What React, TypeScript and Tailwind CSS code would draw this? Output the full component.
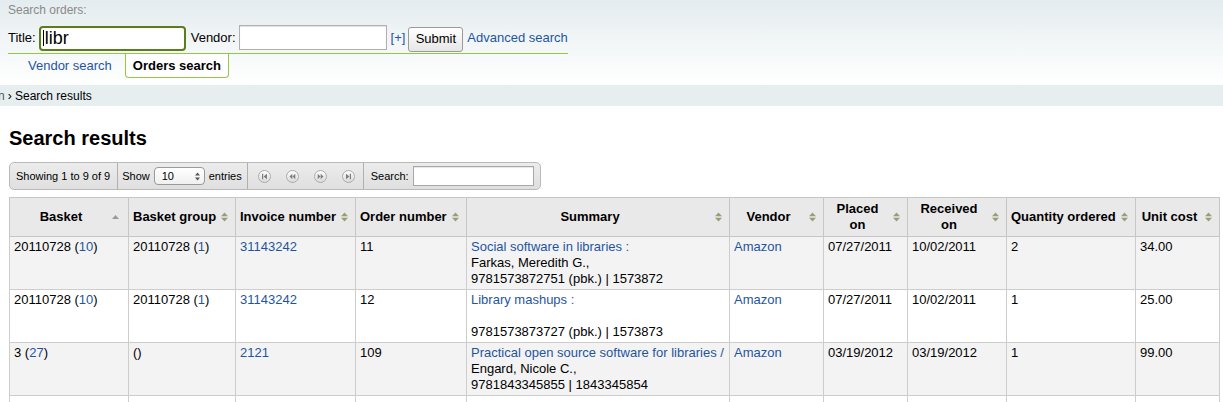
import React from 'react';

const LINK = 'text-[#1f55a0]';

interface OrderRow {
  basket: string;
  basketN: string;
  group: string;
  groupN: string;
  invoice: string;
  order: string;
  title: string;
  author: string;
  isbn: string;
  placed: string;
  received: string;
  qty: string;
  cost: string;
}

const rows: OrderRow[] = [
  {
    basket: '20110728', basketN: '10', group: '20110728', groupN: '1', invoice: '31143242', order: '11',
    title: 'Social software in libraries :', author: 'Farkas, Meredith G.,', isbn: '9781573872751 (pbk.) | 1573872',
    placed: '07/27/2011', received: '10/02/2011', qty: '2', cost: '34.00',
  },
  {
    basket: '20110728', basketN: '10', group: '20110728', groupN: '1', invoice: '31143242', order: '12',
    title: 'Library mashups :', author: '', isbn: '9781573873727 (pbk.) | 1573873',
    placed: '07/27/2011', received: '10/02/2011', qty: '1', cost: '25.00',
  },
  {
    basket: '3', basketN: '27', group: '', groupN: '', invoice: '2121', order: '109',
    title: 'Practical open source software for libraries /', author: 'Engard, Nicole C.,', isbn: '9781843345855 | 1843345854',
    placed: '03/19/2012', received: '03/19/2012', qty: '1', cost: '99.00',
  },
];

const SortBoth = () => (
  <svg width="7" height="10" viewBox="0 0 7 10" className="absolute right-[7px] top-1/2 -translate-y-1/2">
    <path d="M0 4.2L3.5 0.5L7 4.2Z M0 5.8L3.5 9.5L7 5.8Z" fill="#979e78" />
  </svg>
);

const SortUp = () => (
  <svg width="7" height="5" viewBox="0 0 7 5" className="absolute right-[9px] top-1/2 -translate-y-1/2">
    <path d="M0 4.5L3.5 0.5L7 4.5Z" fill="#9a9a9a" />
  </svg>
);

const PageIcon = ({ kind }: { kind: 'first' | 'prev' | 'next' | 'last' }) => {
  const shapes: Record<string, string> = {
    first: 'M4 3.8h1.2v5.4H4Z M9 3.8L5.6 6.5L9 9.2Z',
    prev: 'M6.3 3.8L3.5 6.5L6.3 9.2Z M9.3 3.8L6.5 6.5L9.3 9.2Z',
    next: 'M3.7 3.8L6.5 6.5L3.7 9.2Z M6.7 3.8L9.5 6.5L6.7 9.2Z',
    last: 'M4 3.8L7.4 6.5L4 9.2Z M7.8 3.8h1.2v5.4H7.8Z',
  };
  return (
    <svg width="13" height="13" viewBox="0 0 13 13">
      <defs>
        <linearGradient id={`pg-${kind}`} x1="0" y1="0" x2="0" y2="1">
          <stop offset="0" stopColor="#ffffff" />
          <stop offset="1" stopColor="#d8d8d8" />
        </linearGradient>
      </defs>
      <circle cx="6.5" cy="6.5" r="6" fill={`url(#pg-${kind})`} stroke="#ababab" />
      <path d={shapes[kind]} fill="#7d7d7d" />
    </svg>
  );
};

const headers: { label: React.ReactNode; up?: boolean }[] = [
  { label: 'Basket', up: true },
  { label: 'Basket group' },
  { label: 'Invoice number' },
  { label: 'Order number' },
  { label: 'Summary' },
  { label: 'Vendor' },
  { label: <>Placed<br />on</> },
  { label: <>Received<br />on</> },
  { label: 'Quantity ordered' },
  { label: 'Unit cost' },
];

const widths = ['w-[119px]', 'w-[107px]', 'w-[120px]', 'w-[111px]', 'w-[263px]', 'w-[94px]', 'w-[84px]', 'w-[99px]', 'w-[129px]', 'w-[84px]'];

const cell = 'border border-[#cdcdcd] px-[4px] pt-[2px] pb-[2px] leading-[16px] align-top';

export default function App() {
  return (
    <div className="min-h-[402px] bg-white text-[13px] text-black font-['Liberation_Sans',Arial,Helvetica,sans-serif]">
      {/* header search */}
      <div className="h-[85px] bg-linear-to-b from-[#e4ecef] via-[#f2f6f7] to-white pl-[8px] pt-[2px]">
        <div className="text-[12px] leading-[16px] text-[#8a8a8a]">Search orders:</div>
        <div className="w-[560px] border-b border-[#94c843] mt-[5px]">
          <div className="flex items-center h-[30px]">
            <span>Title:</span>
            <div className="ml-[3px] w-[147px] h-[25px] rounded-[4px] border-2 border-[#5b7d1c] bg-white flex items-center pl-[2px] text-[18px]">
              <span className="w-px h-[16px] bg-black mr-[1px]" />
              <span>libr</span>
            </div>
            <span className="ml-[5px]">Vendor:</span>
            <div className="ml-[3px] w-[148px] h-[25px] border border-[#b0b0b0] bg-white shadow-[inset_0_1px_1px_rgba(0,0,0,0.12)] -mt-[2px]" />
            <span className={`ml-[4px] ${LINK}`}>[+]</span>
            <button className="ml-[3px] w-[55px] h-[25px] mt-[2px] rounded-[3px] border border-[#9a9a9a] bg-linear-to-b from-white to-[#e6e6e6] text-[13px]">
              Submit
            </button>
            <span className={`ml-[4px] ${LINK}`}>Advanced search</span>
          </div>
        </div>
        <div className="flex ml-[12px] gap-[5px]">
          <div className={`h-[23px] px-[8px] flex items-center ${LINK}`}>Vendor search</div>
          <div className="h-[24px] px-[7px] flex items-center font-bold bg-white border-x border-b border-[#94c843] rounded-b-[4px]">
            Orders search
          </div>
        </div>
      </div>

      {/* breadcrumb */}
      <div className="h-[21px] bg-[#e6eef0] flex items-center text-[12px] overflow-hidden">
        <span className="-ml-[2px] text-[#555]">n</span>
        <span className="ml-[3px]">› Search results</span>
      </div>

      <div className="px-[9px]">
        <h1 className="mt-[20px] text-[20px] leading-[24px] font-bold">Search results</h1>

        {/* datatable toolbar */}
        <div className="mt-[12px] w-[532px] h-[28px] flex items-stretch rounded-[5px] border border-[#b9b9b9] bg-linear-to-b from-[#ececec] to-[#dfdfdf] text-[11px]">
          <div className="flex items-center pl-[6px] pr-[7px] border-r border-[#b0b0b0]">Showing 1 to 9 of 9</div>
          <div className="flex items-center pl-[4px] pr-[5px] border-r border-[#b0b0b0]">
            <span>Show</span>
            <div className="ml-[4px] w-[51px] h-[18px] rounded-[4px] border border-[#9a9a9a] bg-linear-to-b from-white to-[#f0f0f0] flex items-center pl-[7px] pr-[4px] justify-between">
              <span>10</span>
              <svg width="5" height="9" viewBox="0 0 5 9">
                <path d="M0 3.5L2.5 0.5L5 3.5Z M0 5.5L2.5 8.5L5 5.5Z" fill="#555" />
              </svg>
            </div>
            <span className="ml-[4px]">entries</span>
          </div>
          <div className="flex items-center gap-[15px] pl-[10px] pr-[8px] border-r border-[#b0b0b0]">
            <PageIcon kind="first" />
            <PageIcon kind="prev" />
            <PageIcon kind="next" />
            <PageIcon kind="last" />
          </div>
          <div className="flex items-center pl-[7px] pr-[6px]">
            <span>Search:</span>
            <div className="ml-[4px] w-[121px] h-[20px] border border-[#a8a8a8] bg-white shadow-[inset_0_1px_1px_rgba(0,0,0,0.1)]" />
          </div>
        </div>

        {/* results table */}
        <table className="mt-[7px] w-[1210px] table-fixed border-collapse">
          <colgroup>
            {widths.map((w, i) => (
              <col key={i} className={w} />
            ))}
          </colgroup>
          <thead>
            <tr className="bg-[#e9e9e9]">
              {headers.map((h, i) => (
                <th
                  key={i}
                  className="relative border border-[#c6c6c6] pl-[4px] pr-[20px] py-[3px] leading-[16px] font-bold text-center whitespace-nowrap align-middle"
                >
                  {h.label}
                  {h.up ? <SortUp /> : <SortBoth />}
                </th>
              ))}
            </tr>
          </thead>
          <tbody>
            {rows.map((r, i) => (
              <tr key={i} className={i % 2 === 0 ? 'bg-[#f3f3f3]' : 'bg-white'}>
                <td className={cell}>
                  {r.basket} (<span className={LINK}>{r.basketN}</span>)
                </td>
                <td className={cell}>
                  {r.group ? `${r.group} ` : ''}(<span className={LINK}>{r.groupN}</span>)
                </td>
                <td className={`${cell} ${LINK}`}>{r.invoice}</td>
                <td className={cell}>{r.order}</td>
                <td className={`${cell} whitespace-nowrap`}>
                  <div className={LINK}>{r.title}</div>
                  <div className="h-[16px]">{r.author}</div>
                  <div className="h-[16px]">{r.isbn}</div>
                </td>
                <td className={`${cell} ${LINK}`}>Amazon</td>
                <td className={cell}>{r.placed}</td>
                <td className={cell}>{r.received}</td>
                <td className={cell}>{r.qty}</td>
                <td className={cell}>{r.cost}</td>
              </tr>
            ))}
            <tr className="bg-white">
              {widths.map((_, i) => (
                <td key={i} className={`${cell} h-[53px]`} />
              ))}
            </tr>
          </tbody>
        </table>
      </div>
    </div>
  );
}
